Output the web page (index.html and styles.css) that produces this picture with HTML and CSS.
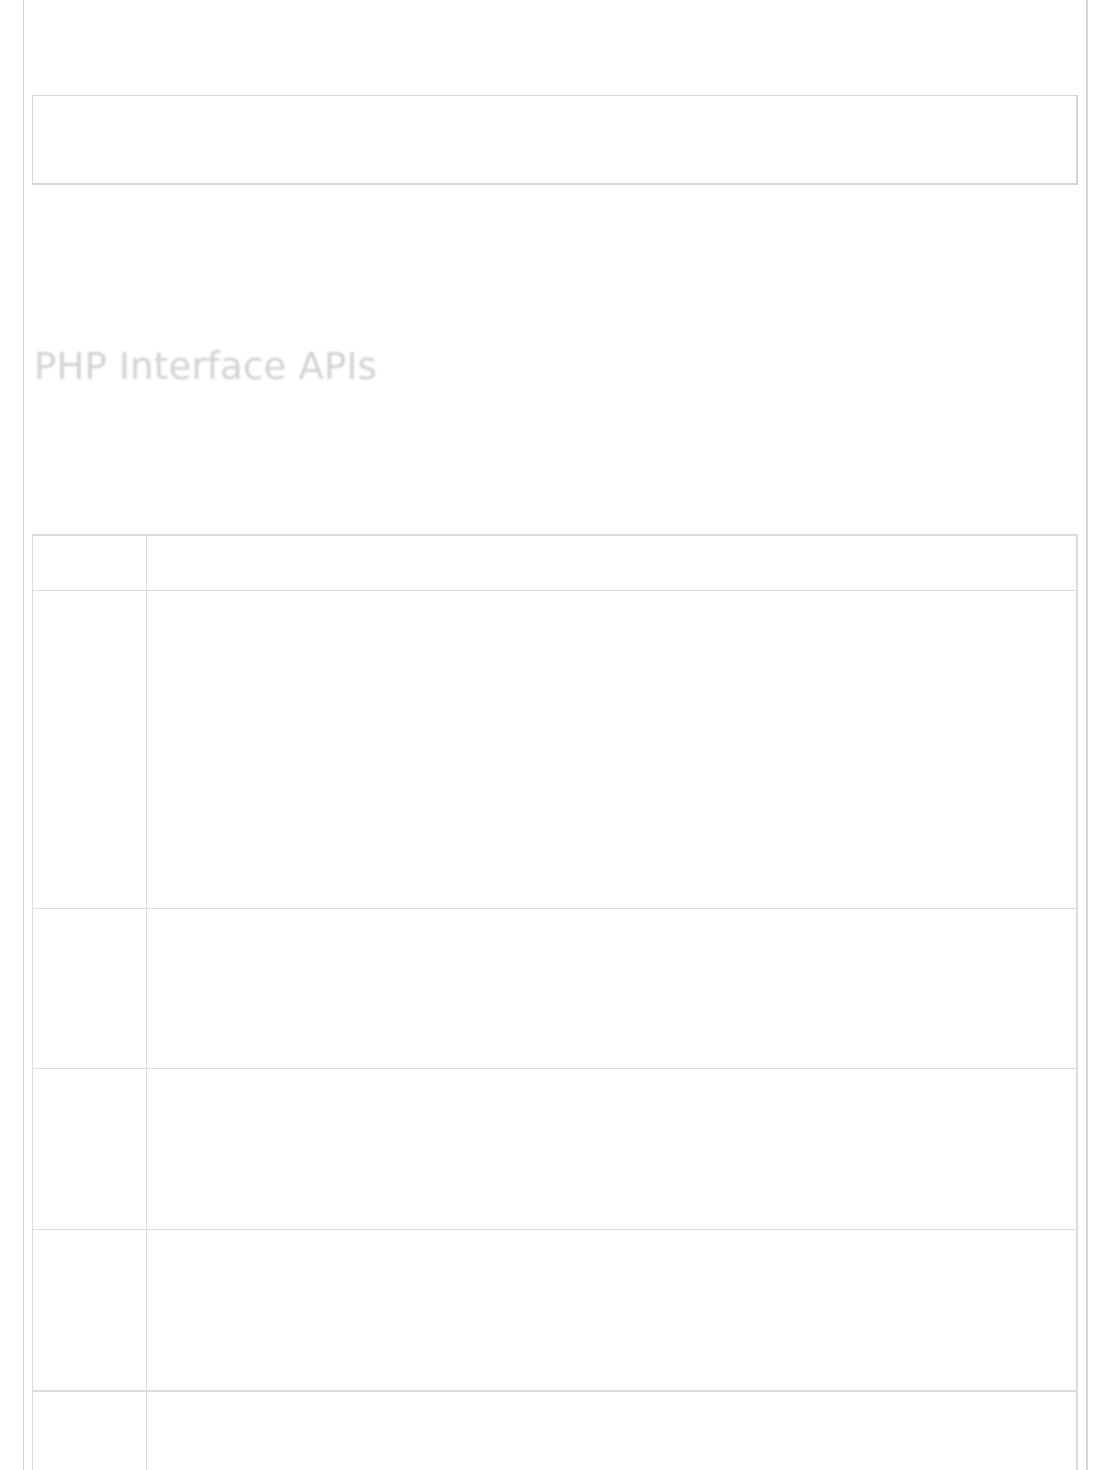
FILE: index.html
```html
<!DOCTYPE html>
<html>
<head>
<meta charset="utf-8">
<title>PHP Interface APIs</title>
<link rel="stylesheet" href="styles.css">
</head>
<body>
<div class="page">
  <div class="notice"></div>
  <h2 class="title">PHP Interface APIs</h2>
  <table class="api-table">
    <tr class="head"><td class="c1"></td><td class="c2"></td></tr>
    <tr class="r-tall"><td class="c1"></td><td class="c2"></td></tr>
    <tr class="r-mid"><td class="c1"></td><td class="c2"></td></tr>
    <tr class="r-mid2"><td class="c1"></td><td class="c2"></td></tr>
    <tr class="r-mid2"><td class="c1"></td><td class="c2"></td></tr>
    <tr class="r-last"><td class="c1"></td><td class="c2"></td></tr>
  </table>
</div>
</body>
</html>
```

FILE: styles.css
```css
html, body {
  margin: 0;
  padding: 0;
  background: #ffffff;
  font-family: "DejaVu Sans", Verdana, sans-serif;
}

.page {
  margin: 0 23px;
  width: 1046px;
  min-height: 1470px;
  padding: 95px 8px 0 8px;
  border-left: 1px solid #d4d4d4;
  border-right: 2px solid #d4d4d4;
  box-sizing: content-box;
}

.notice {
  height: 87px;
  border-top: 1px solid #d6d6d6;
  border-left: 1px solid #d6d6d6;
  border-right: 2px solid #d6d6d6;
  border-bottom: 2px solid #d6d6d6;
  box-sizing: content-box;
  width: 1043px;
}

.title {
  margin: 160px 0 0 0;
  padding-left: 2px;
  height: 44px;
  font-size: 37px;
  line-height: 44px;
  letter-spacing: 0.2px;
  font-weight: normal;
  color: #d2d2d2;
  filter: blur(1.3px);
}

.api-table {
  margin-top: 145px;
  width: 1046px;
  border-collapse: collapse;
  border-top: 2px solid #dcdcdc;
  border-right: 2px solid #dcdcdc;
  border-left: 1px solid #dcdcdc;
}

.api-table td {
  border: 1px solid #dcdcdc;
  padding: 0;
}

.api-table .c1 { width: 113px; }

.head td { height: 54px; }
.r-tall td { height: 317px; }
.r-mid td { height: 159px; }
.r-mid2 td { height: 160px; }
.r-last td {
  height: 200px;
  border-top: 2px solid #dcdcdc;
}
```
